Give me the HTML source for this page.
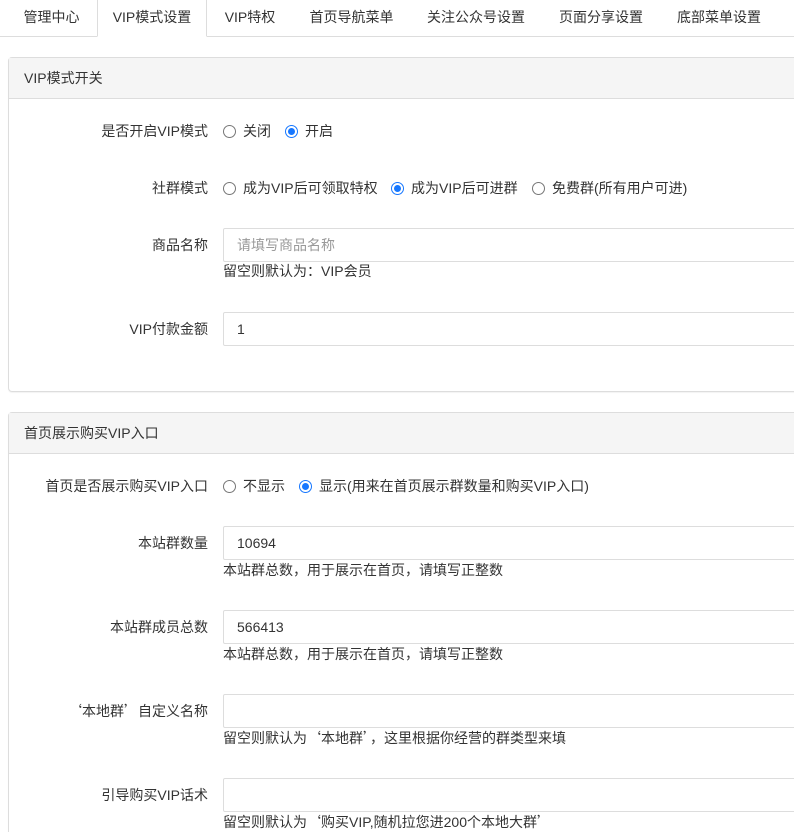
<!DOCTYPE html><html><head><meta charset="utf-8"><style>
*{margin:0;padding:0;box-sizing:border-box}
html,body{width:794px;height:832px;overflow:hidden}
body{background:#fff;font-family:"Liberation Sans","Noto Sans CJK SC",sans-serif;font-size:14px;color:#333;position:relative}
.q{font-family:"Noto Sans CJK SC",sans-serif}
.a{position:absolute;white-space:nowrap;line-height:20px}
.tab{position:absolute;top:0;height:37px;line-height:34px;text-align:center}
.tab.act{border:1px solid #ddd;border-bottom:1px solid #fff;border-top:none;background:#fff;z-index:2}
.panel{position:absolute;left:8px;width:800px;border:1px solid #ddd;border-radius:4px;box-shadow:0 1px 1px rgba(0,0,0,.05)}
.ph{height:41px;background:#f5f5f5;border-bottom:1px solid #ddd;padding:10px 15px;line-height:20px}
.lb{position:absolute;right:586px;white-space:nowrap;line-height:20px}
.inp{position:absolute;left:223px;width:600px;height:34px;border:1px solid #ddd;border-radius:2px;padding:0 13px;line-height:32px}
.r{position:absolute;width:13px;height:13px;border:1px solid #777;border-radius:50%}
.r.on{border-color:#1677ff}
.r.on:after{content:"";position:absolute;left:2px;top:2px;width:7px;height:7px;border-radius:50%;background:#1677ff}
.help{position:absolute;left:223px;white-space:nowrap;line-height:20px}
</style></head><body>
<div style="position:absolute;left:0;top:36px;width:794px;border-top:1px solid #ddd"></div>
<div class="tab" style="left:8px;width:87px">管理中心</div>
<div class="tab act" style="left:97px;width:110px">VIP模式设置</div>
<div class="tab" style="left:209px;width:82px">VIP特权</div>
<div class="tab" style="left:294px;width:115px">首页导航菜单</div>
<div class="tab" style="left:411px;width:130px">关注公众号设置</div>
<div class="tab" style="left:543px;width:116px">页面分享设置</div>
<div class="tab" style="left:661px;width:116px">底部菜单设置</div>

<div class="panel" style="top:57px;height:335px"><div class="ph">VIP模式开关</div></div>
<div class="lb" style="top:121px">是否开启VIP模式</div>
<div class="r" style="left:223px;top:125px"></div><div class="a" style="left:243px;top:121px">关闭</div>
<div class="r on" style="left:285px;top:125px"></div><div class="a" style="left:305px;top:121px">开启</div>
<div class="lb" style="top:178px">社群模式</div>
<div class="r" style="left:223px;top:182px"></div><div class="a" style="left:243px;top:178px">成为VIP后可领取特权</div>
<div class="r on" style="left:391px;top:182px"></div><div class="a" style="left:411px;top:178px">成为VIP后可进群</div>
<div class="r" style="left:532px;top:182px"></div><div class="a" style="left:552px;top:178px">免费群(所有用户可进)</div>
<div class="lb" style="top:235px">商品名称</div>
<div class="inp" style="top:228px;color:#999">请填写商品名称</div>
<div class="help" style="top:261px">留空则默认为：VIP会员</div>
<div class="lb" style="top:319px">VIP付款金额</div>
<div class="inp" style="top:312px">1</div>

<div class="panel" style="top:412px;height:440px"><div class="ph">首页展示购买VIP入口</div></div>
<div class="lb" style="top:476px">首页是否展示购买VIP入口</div>
<div class="r" style="left:223px;top:480px"></div><div class="a" style="left:243px;top:476px">不显示</div>
<div class="r on" style="left:299px;top:480px"></div><div class="a" style="left:319px;top:476px">显示(用来在首页展示群数量和购买VIP入口)</div>
<div class="lb" style="top:533px">本站群数量</div>
<div class="inp" style="top:526px">10694</div>
<div class="help" style="top:560px">本站群总数，用于展示在首页，请填写正整数</div>
<div class="lb" style="top:617px">本站群成员总数</div>
<div class="inp" style="top:610px">566413</div>
<div class="help" style="top:644px">本站群总数，用于展示在首页，请填写正整数</div>
<div class="lb" style="top:701px"><span class="q">‘</span>本地群<span class="q">’</span>自定义名称</div>
<div class="inp" style="top:694px"></div>
<div class="help" style="top:728px">留空则默认为<span class="q">‘</span>本地群<span class="q">’</span>，这里根据你经营的群类型来填</div>
<div class="lb" style="top:785px">引导购买VIP话术</div>
<div class="inp" style="top:778px"></div>
<div class="help" style="top:812px">留空则默认为<span class="q">‘</span>购买VIP,随机拉您进200个本地大群<span class="q">’</span></div>
</body></html>
